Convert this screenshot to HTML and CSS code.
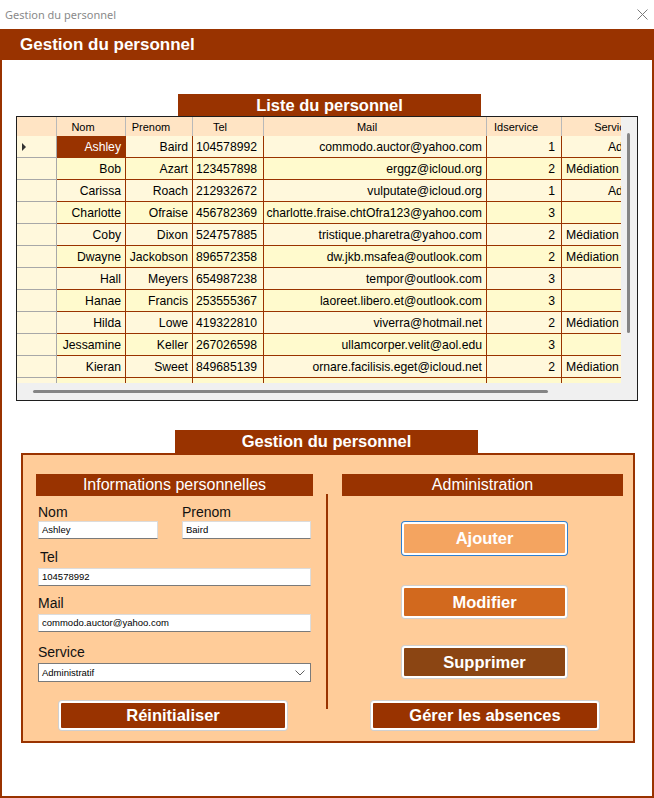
FILE: index.html
```html
<!DOCTYPE html>
<html lang="fr">
<head>
<meta charset="utf-8">
<title>Gestion du personnel</title>
<link rel="stylesheet" href="styles.css">
</head>
<body>
<div class="titlebar">
  <span class="title-text">Gestion du personnel</span>
  <svg class="close" width="11" height="11" viewBox="0 0 11 11"><path d="M0.5 0.5 L10.5 10.5 M10.5 0.5 L0.5 10.5" stroke="#7a7a7a" stroke-width="1" fill="none"/></svg>
</div>
<div class="frame">
  <div class="frame-head">Gestion du personnel</div>
  <div class="frame-body">
    <div class="section-title list-title">Liste du personnel</div>
    <div class="grid">
      <div class="grid-main">
        <div class="viewport">
          <table class="dgv">
            <colgroup>
              <col class="c-rh"><col class="c-nom"><col class="c-prenom"><col class="c-tel"><col class="c-mail"><col class="c-id"><col class="c-serv">
            </colgroup>
            <thead>
              <tr class="hdr">
                <th class="rh"></th><th>Nom</th><th>Prenom</th><th>Tel</th><th>Mail</th><th>Idservice</th><th>Service</th>
              </tr>
            </thead>
            <tbody>
              <tr class="odd"><td class="rh"><span class="arrow"></span></td><td class="sel">Ashley</td><td>Baird</td><td class="l">104578992</td><td>commodo.auctor@yahoo.com</td><td class="id">1</td><td>Administratif</td></tr>
              <tr class="even"><td class="rh"></td><td>Bob</td><td>Azart</td><td class="l">123457898</td><td>erggz@icloud.org</td><td class="id">2</td><td class="med">Médiation</td></tr>
              <tr class="odd"><td class="rh"></td><td>Carissa</td><td>Roach</td><td class="l">212932672</td><td>vulputate@icloud.org</td><td class="id">1</td><td>Administratif</td></tr>
              <tr class="even"><td class="rh"></td><td>Charlotte</td><td>Ofraise</td><td class="l">456782369</td><td>charlotte.fraise.chtOfra123@yahoo.com</td><td class="id">3</td><td></td></tr>
              <tr class="odd"><td class="rh"></td><td>Coby</td><td>Dixon</td><td class="l">524757885</td><td>tristique.pharetra@yahoo.com</td><td class="id">2</td><td class="med">Médiation</td></tr>
              <tr class="even"><td class="rh"></td><td>Dwayne</td><td>Jackobson</td><td class="l">896572358</td><td>dw.jkb.msafea@outlook.com</td><td class="id">2</td><td class="med">Médiation</td></tr>
              <tr class="odd"><td class="rh"></td><td>Hall</td><td>Meyers</td><td class="l">654987238</td><td>tempor@outlook.com</td><td class="id">3</td><td></td></tr>
              <tr class="even"><td class="rh"></td><td>Hanae</td><td>Francis</td><td class="l">253555367</td><td>laoreet.libero.et@outlook.com</td><td class="id">3</td><td></td></tr>
              <tr class="odd"><td class="rh"></td><td>Hilda</td><td>Lowe</td><td class="l">419322810</td><td>viverra@hotmail.net</td><td class="id">2</td><td class="med">Médiation</td></tr>
              <tr class="even"><td class="rh"></td><td>Jessamine</td><td>Keller</td><td class="l">267026598</td><td>ullamcorper.velit@aol.edu</td><td class="id">3</td><td></td></tr>
              <tr class="odd"><td class="rh"></td><td>Kieran</td><td>Sweet</td><td class="l">849685139</td><td>ornare.facilisis.eget@icloud.net</td><td class="id">2</td><td class="med">Médiation</td></tr>
              <tr class="even"><td class="rh"></td><td></td><td></td><td></td><td></td><td></td><td></td></tr>
            </tbody>
          </table>
        </div>
        <div class="vscroll"><div class="vthumb"></div></div>
      </div>
      <div class="hscroll"><div class="hthumb"></div></div>
    </div>

    <div class="section-title tab-title">Gestion du personnel</div>
    <div class="panel">
      <div class="col-left">
        <div class="bar">Informations personnelles</div>
        <div class="pair">
          <div class="field f-nom">
            <label class="lbl">Nom</label>
            <div class="input">Ashley</div>
          </div>
          <div class="field f-prenom">
            <label class="lbl">Prenom</label>
            <div class="input">Baird</div>
          </div>
        </div>
        <div class="field f-wide f-tel">
          <label class="lbl lbl-in">Tel</label>
          <div class="input">104578992</div>
        </div>
        <div class="field f-wide f-mail">
          <label class="lbl">Mail</label>
          <div class="input">commodo.auctor@yahoo.com</div>
        </div>
        <div class="field f-wide f-serv">
          <label class="lbl">Service</label>
          <div class="select">
            <span>Administratif</span>
            <svg width="10" height="6" viewBox="0 0 10 6"><path d="M0.5 0.5 L5 5 L9.5 0.5" stroke="#606060" stroke-width="1" fill="none"/></svg>
          </div>
        </div>
        <button class="btn btn-reset">Réinitialiser</button>
      </div>
      <div class="col-mid"><div class="divider"></div></div>
      <div class="col-right">
        <div class="bar">Administration</div>
        <button class="btn btn-add">Ajouter</button>
        <button class="btn btn-mod">Modifier</button>
        <button class="btn btn-del">Supprimer</button>
        <button class="btn btn-abs">Gérer les absences</button>
      </div>
    </div>
  </div>
</div>
</body>
</html>
```

FILE: styles.css
```css
* { box-sizing: border-box; }
html, body { margin: 0; padding: 0; }
body {
  width: 654px;
  height: 798px;
  overflow: hidden;
  background: #ffffff;
  font-family: "Liberation Sans", Arial, sans-serif;
  color: #000;
}

/* window title bar */
.titlebar {
  height: 29px;
  display: flex;
  align-items: center;
  justify-content: space-between;
  padding: 0 6px 0 5px;
}
.title-text {
  font-family: "Noto Sans", "Open Sans", sans-serif;
  font-size: 11px;
  color: #8a8a8a;
}
.close { display: block; }

/* main frame */
.frame {
  height: 769px;
  border: 2px solid #993300;
  border-top: 0;
}
.frame-head {
  height: 31px;
  margin: 0 -2px;
  padding-left: 20px;
  background: #993300;
  color: #fff;
  font-weight: bold;
  font-size: 17px;
  line-height: 31px;
}
.frame-body {
  padding-top: 34px;
}
.section-title {
  width: 303px;
  height: 22px;
  background: #993300;
  color: #fff;
  font-weight: bold;
  font-size: 16.5px;
  line-height: 22px;
  text-align: center;
}
.list-title { margin-left: 176px; }

/* data grid */
.grid {
  margin-left: 14px;
  width: 622px;
  height: 285px;
  border: 1px solid #1e1e1e;
  background: #f0f0f0;
  display: flex;
  flex-direction: column;
}
.grid-main {
  display: flex;
  height: 266px;
}
.viewport {
  width: 604px;
  height: 266px;
  overflow: hidden;
}
.vscroll {
  width: 16px;
  height: 266px;
  background: #f0f0f0;
  padding: 16px 0 0 6px;
}
.vthumb {
  width: 3px;
  height: 200px;
  background: #858585;
  border-radius: 2px;
}
.hscroll {
  height: 17px;
  background: #f0f0f0;
  padding: 7px 0 0 16px;
}
.hthumb {
  width: 515px;
  height: 3px;
  background: #858585;
  border-radius: 2px;
}

.dgv {
  table-layout: fixed;
  width: 663px;
  border-collapse: separate;
  border-spacing: 0;
  font-size: 12.2px;
}
.c-rh { width: 40px; }
.c-nom { width: 69px; }
.c-prenom { width: 67px; }
.c-tel { width: 71px; }
.c-mail { width: 223px; }
.c-id { width: 75px; }
.c-serv { width: 118px; }

.dgv th {
  height: 19px;
  padding: 0 16px 0 0;
  background: #ffe4c4;
  font-weight: normal;
  font-size: 11px;
  text-align: center;
  white-space: nowrap;
  overflow: hidden;
  border-right: 1px solid #b9b9b9;
}
.dgv th.rh { padding: 0; }
.dgv tbody tr { height: 22px; }
.dgv td {
  padding: 0 4px 0 0;
  text-align: right;
  white-space: nowrap;
  overflow: hidden;
  border-right: 1px solid #993300;
  border-bottom: 1px solid #993300;
}
.dgv tr.odd td { background: #fff8dc; }
.dgv tr.even td { background: #fffacd; }
.dgv td.l { text-align: left; padding: 0 0 0 3px; }
.dgv td.id { padding-right: 6px; }
.dgv td.med { text-align: left; padding: 0 0 0 4px; }
.dgv tr td.sel { background: #993300; color: #fff; }
.dgv tr td.rh {
  background: #fff8dc;
  border-right: 1px solid #a8a8a8;
  border-bottom: 1px solid #a8a8a8;
  padding: 0 0 0 5px;
  text-align: left;
}
.arrow {
  display: block;
  width: 0;
  height: 0;
  border-top: 4px solid transparent;
  border-bottom: 4px solid transparent;
  border-left: 4px solid #333;
}

/* lower section */
.tab-title {
  margin-top: 29px;
  margin-left: 173px;
  height: 23px;
  line-height: 23px;
}
.panel {
  margin-left: 19px;
  width: 614px;
  height: 290px;
  background: #ffcc99;
  border: 2px solid #993300;
  padding: 19px 10px 0 13px;
  display: grid;
  grid-template-columns: 277px 29px 281px;
  align-items: start;
}
.bar {
  height: 22px;
  background: #993300;
  color: #fff;
  font-size: 16px;
  line-height: 22px;
  text-align: center;
}
.col-left, .col-right {
  display: flex;
  flex-direction: column;
  align-items: flex-start;
}
.col-left .bar, .col-right .bar { width: 100%; }
.divider {
  margin: 20px 0 0 13px;
  width: 2px;
  height: 215px;
  background: #993300;
}

.pair {
  display: flex;
  margin-top: 8px;
}
.field { display: flex; flex-direction: column; }
.f-nom { width: 120px; margin-left: 2px; }
.f-prenom { width: 129px; margin-left: 24px; }
.f-wide { width: 273px; margin-left: 2px; }
.f-tel { margin-top: 10px; }
.f-mail { margin-top: 9px; }
.f-serv { margin-top: 12px; }
.lbl {
  display: block;
  height: 16px;
  line-height: 16px;
  font-size: 14px;
  color: #111;
  margin-bottom: 1px;
}
.f-wide .lbl { margin-bottom: 3px; }
.lbl-in { padding-left: 2px; }
.input {
  height: 18px;
  background: #fff;
  border: 1px solid #dcdcdc;
  border-bottom-color: #7a7a7a;
  font-size: 9.5px;
  line-height: 16px;
  padding-left: 3px;
  white-space: nowrap;
  overflow: hidden;
}
.select {
  height: 19px;
  background: #fff;
  border: 1px solid #7a7a7a;
  font-size: 9.5px;
  display: flex;
  align-items: center;
  justify-content: space-between;
  padding: 0 5px 0 3px;
}
.select svg { display: block; }

.btn {
  display: block;
  padding: 0;
  margin: 0;
  border: 2px solid #fff;
  border-radius: 3px;
  box-shadow: 0 0 0 1px #d0d0d0;
  color: #fff;
  font-family: "Liberation Sans", Arial, sans-serif;
  font-weight: bold;
  font-size: 16.5px;
  text-align: center;
  cursor: default;
}
.btn-reset {
  margin: 19px 0 0 23px;
  width: 228px;
  height: 29px;
  background: #993300;
}
.btn-add {
  margin: 26px 0 0 60px;
  width: 165px;
  height: 33px;
  background: #f4a460;
  box-shadow: 0 0 0 1px #2f7fd0;
}
.btn-mod {
  margin: 31px 0 0 60px;
  width: 165px;
  height: 32px;
  background: #d2691e;
}
.btn-del {
  margin: 28px 0 0 60px;
  width: 165px;
  height: 32px;
  background: #8b4513;
}
.btn-abs {
  margin: 23px 0 0 29px;
  width: 228px;
  height: 29px;
  background: #993300;
}
```
